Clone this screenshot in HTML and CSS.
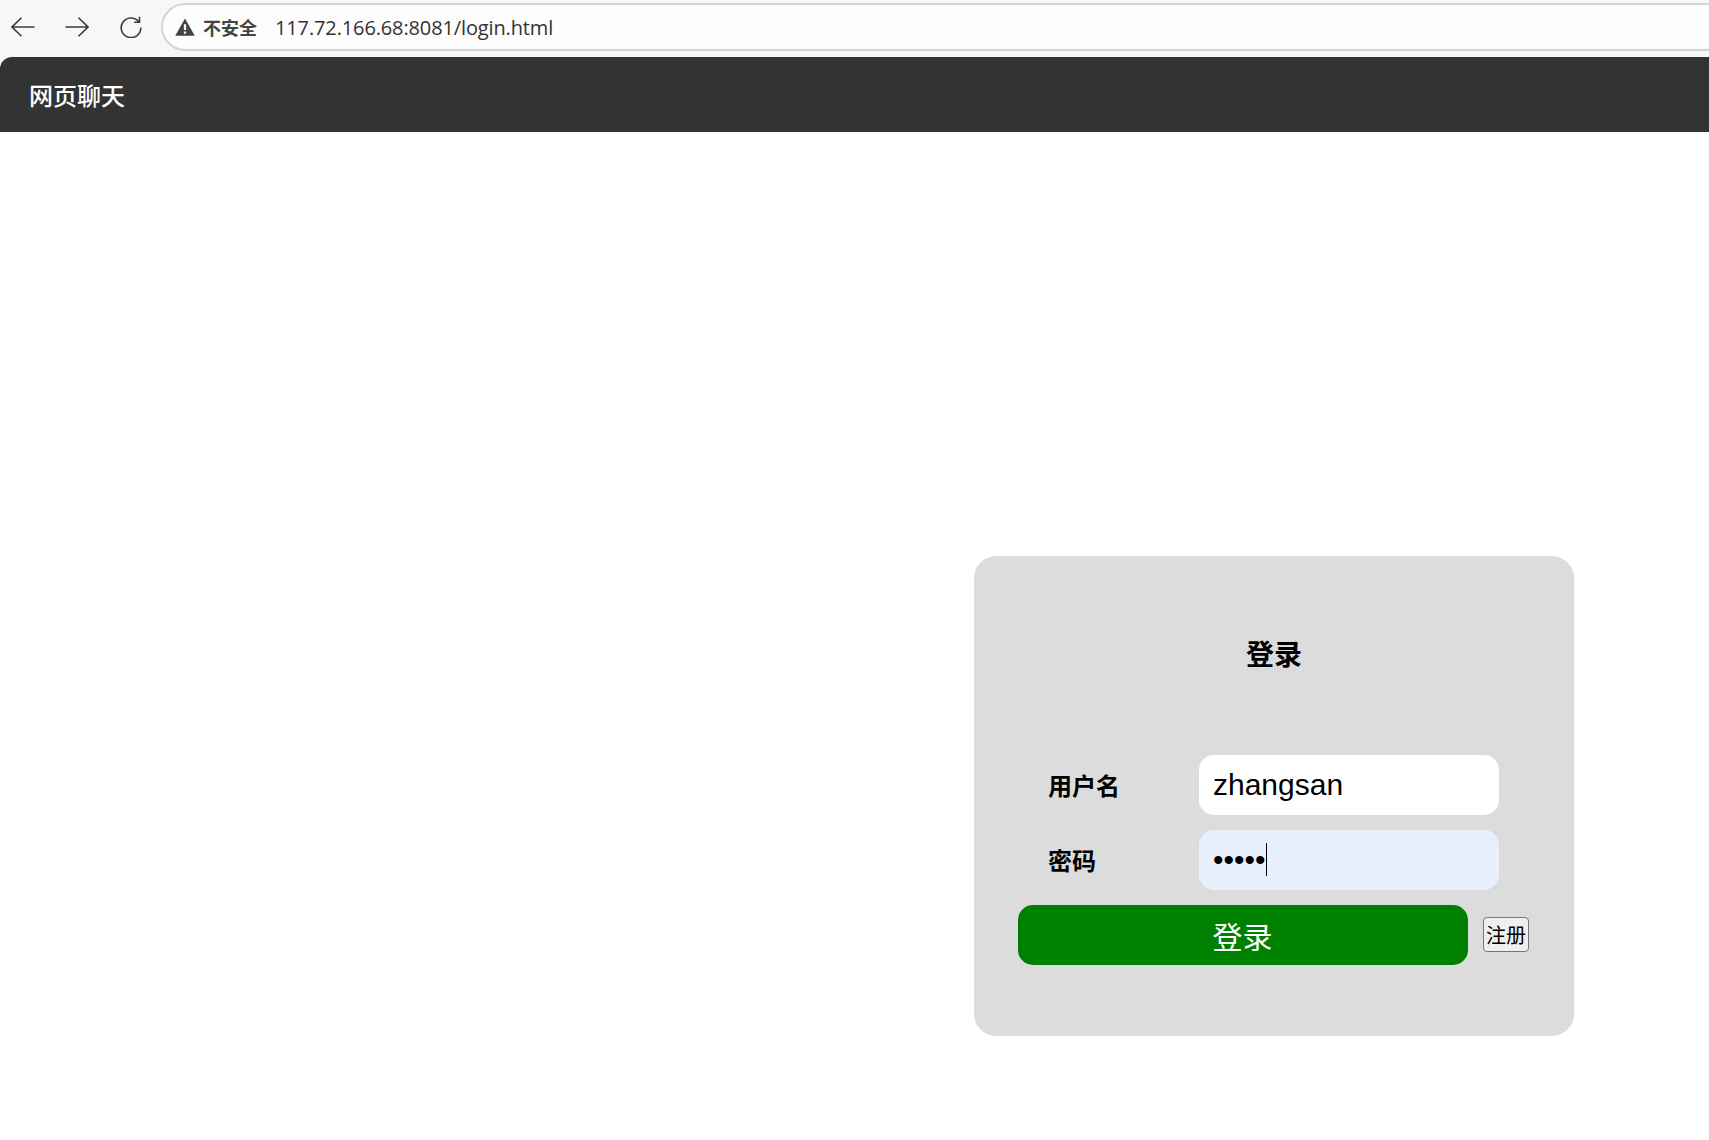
FILE: index.html
```html
<!DOCTYPE html>
<html lang="zh-CN">
<head>
  <meta charset="UTF-8" />
  <title>网页聊天</title>
  <link rel="stylesheet" href="styles.css">
</head>
<body>
  <div class="toolbar">
    <svg class="tool-icon icon-back" viewBox="0 0 24 20"><path d="M23.5 10H1M10.5 .8 1 10l9.500 9.200"/></svg>
    <svg class="tool-icon icon-forward" viewBox="0 0 24 20"><path d="M.5 10H23M13.500 .8 23 10l-9.500 9.200"/></svg>
    <svg class="tool-icon icon-reload" viewBox="0 0 22 22"><path d="M18.500 5.500A9.800 9.800 0 1 0 20.800 11.500M19.500 .8v5.400h-5.400"/></svg>
    <div class="address">
      <svg class="warn-icon" viewBox="0 0 18 16"><path fill-rule="evenodd" d="M9 .4 17.800 15.800H.2ZM8 5.500v5.300h2V5.500ZM8 12v2h2v-2Z"/></svg>
      <span class="warn-text">不安全</span>
      <span class="url">117.72.166.68:8081/login.html</span>
    </div>
  </div>

  <div class="nav">网页聊天</div>

  <div class="main">
    <form class="login-dialog">
      <h3>登录</h3>
      <div class="row">
        <label for="username">用户名</label>
        <input type="text" id="username" value="zhangsan" />
      </div>
      <div class="row">
        <label for="password">密码</label>
        <span class="password-wrap">
          <input type="password" id="password" value="12345" />
          <span class="caret"></span>
        </span>
      </div>
      <div class="row submit-row">
        <button type="button" class="submit">登录</button>
        <button type="button" class="register">注册</button>
      </div>
    </form>
  </div>
</body>
</html>
```

FILE: styles.css
```css
* { box-sizing: border-box; }
html, body { margin: 0; padding: 0; height: 100%; overflow: hidden; }
body { background: #f7f7f7; font-family: "Liberation Sans", "Noto Sans CJK SC", sans-serif; color: #000; display: flex; flex-direction: column; }

.toolbar { height: 57px; display: flex; align-items: flex-start; padding-top: 3px; }
.tool-icon { fill: none; stroke: #3c3c3c; stroke-width: 1.6; flex: none; margin-top: 14px; }
.icon-back { width: 24px; height: 20px; margin-left: 11px; }
.icon-forward { width: 24px; height: 20px; margin-left: 30px; }
.icon-reload { width: 22px; height: 22px; margin-left: 31px; margin-top: 13px; }
.address { flex: 1; height: 48px; margin-left: 19px; margin-right: -30px; background: #fdfdfd; border: 2px solid #d4d4d4; border-radius: 24px; display: flex; align-items: center; padding-left: 12px; }
.warn-icon { width: 20px; height: 18px; fill: #444; flex: none; }
.warn-text { margin-left: 8px; font-family: "Noto Sans CJK SC", sans-serif; font-size: 18px; font-weight: bold; color: #444; }
.url { margin-left: 18px; font-family: "Open Sans", sans-serif; font-size: 20px; color: #333; letter-spacing: -.13px; }

.nav { height: 75px; flex: none; background: #333; color: #fff; border-top-left-radius: 12px; padding-left: 29px; font-family: "Noto Sans CJK SC", sans-serif; font-size: 24px; font-weight: 500; line-height: 75px; }

.main { flex: 1; background: #fff; padding: 424px 0 0 974px; }
.login-dialog { width: 600px; height: 480px; background: #dcdcdc; border-radius: 22px; padding-top: 22px; }
.login-dialog h3 { margin: 0 0 27px; text-align: center; font-size: 28px; line-height: 150px; font-family: "Noto Sans CJK SC", sans-serif; }

.row { display: flex; justify-content: center; align-items: center; margin-bottom: 15px; }
.row label { width: 150px; padding: 0 0 2px; margin-left: -1px; margin-right: 1px; font-size: 24px; font-weight: bold; font-family: "Noto Sans CJK SC", sans-serif; }
.row input { display: block; width: 300px; height: 60px; border: none; outline: none; border-radius: 15px; padding: 0 14px; font-family: "Liberation Sans", sans-serif; font-size: 30px; background: #fff; color: #000; }
#password { background: #e8f0fe; }

.password-wrap { position: relative; display: block; }
.caret { position: absolute; left: 67px; top: 13px; width: 1px; height: 33px; background: #000; }

.submit-row { gap: 15px; margin-bottom: 0; margin-left: -2px; }
.submit { width: 450px; height: 60px; border: none; border-radius: 15px; background: #008000; color: #fff; font-family: "Noto Sans CJK SC", sans-serif; font-size: 30px; padding: 0 0 1px; }
.register { width: 46px; height: 35px; margin-bottom: 2px; padding: 0 0 0 1px; background: #efefef; border: 1px solid #767676; border-radius: 4px; font-family: "Noto Sans CJK SC", sans-serif; font-size: 20px; color: #000; }
```
